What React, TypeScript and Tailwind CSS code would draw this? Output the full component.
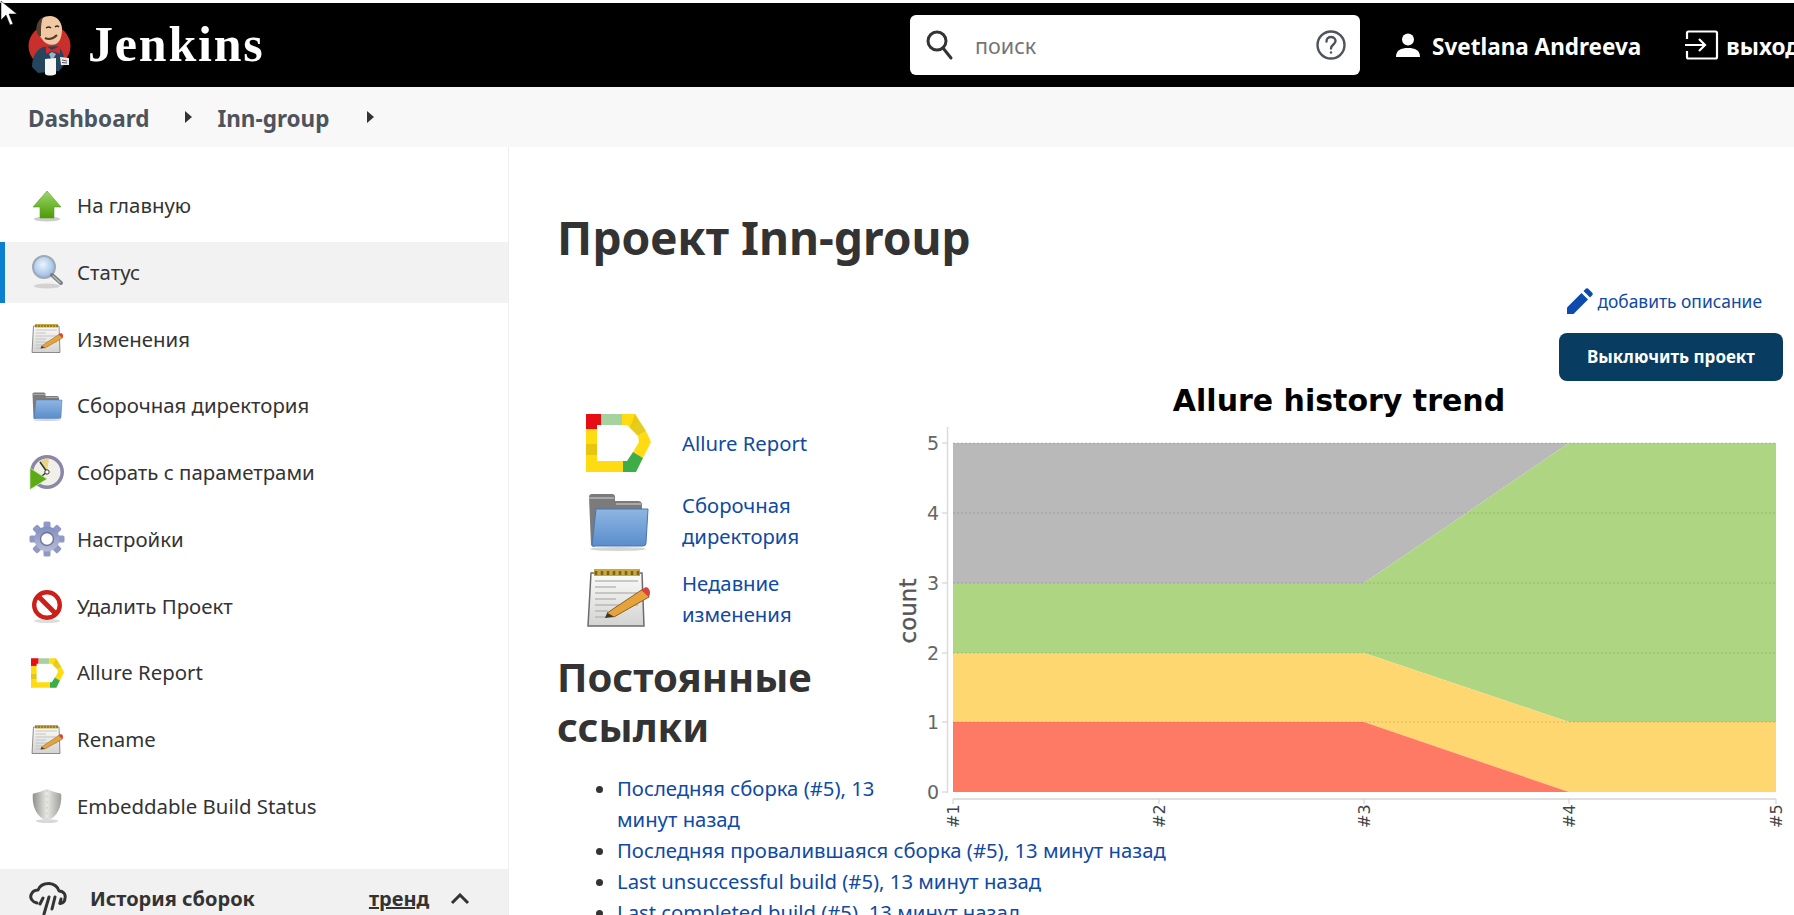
import React from "react";

const FONT = { fontFamily: '"Noto Sans", "Open Sans", sans-serif' };

function JenkinsLogo() {
  return (
    <svg width="46" height="62" viewBox="0 0 46 62" className="shrink-0">
      <circle cx="23.5" cy="31" r="21" fill="#c9302c" />
      <path d="M6 52 C6 42 10 35 17 32 L31 31 C36 34 39 40 38 50 L33 56 L12 58 Z" fill="#25445d" />
      <path d="M13 11 C13 4 18 1 24 1 C31 1 35 6 36 13 C36 20 35 26 30 29 C25 31 19 29 16 24 C13 21 12 16 13 11 Z" fill="#f0c8a4" />
      <path d="M11 18 C9 11 12 5 17 2 C15 8 15 12 15 21 C13 22 12 20 11 18 Z" fill="#54402f" />
      <path d="M20 13 q3 -2 5 0 M29 12 q2 -2 4 0" stroke="#3a2a20" strokeWidth="1.3" fill="none" />
      <path d="M19 23 q6 3 12 -3" stroke="#5a3a2a" strokeWidth="2" fill="none" />
      <path d="M20 31 L26 35 L34 31 L34 39 L26 36 L20 39 Z" fill="#d8262c" />
      <path d="M23 39 L26 46 L30 39 L26 37 Z" fill="#9db3c4" />
      <path d="M19 44 L30 43 L30 59 C27 61 21 61 19 59 Z" fill="#f6f6f2" />
      <path d="M34 42 L43 43 L43 50 L35 50 Z" fill="#f1ece0" />
      <path d="M36 45 L41 46 M36 47.5 L41 48" stroke="#556" strokeWidth="1" />
    </svg>
  );
}

function UpArrow() {
  return (
    <svg width="36" height="36" viewBox="0 0 36 36">
      <defs>
        <linearGradient id="ga" x1="0" y1="0" x2="0" y2="1">
          <stop offset="0" stopColor="#9ad86a" />
          <stop offset="1" stopColor="#4e9a06" />
        </linearGradient>
      </defs>
      <ellipse cx="18" cy="31" rx="13" ry="2.5" fill="#ccc" />
      <path d="M18 3 L32 19 L25 19 L25 30 L11 30 L11 19 L4 19 Z" fill="url(#ga)" stroke="#5c9d2c" strokeWidth="0.6" />
    </svg>
  );
}

function Magnifier() {
  return (
    <svg width="36" height="36" viewBox="0 0 36 36">
      <defs>
        <radialGradient id="gm" cx="0.45" cy="0.4" r="0.6">
          <stop offset="0" stopColor="#ecf4fd" />
          <stop offset="1" stopColor="#95b8e4" />
        </radialGradient>
      </defs>
      <ellipse cx="18" cy="32" rx="13" ry="2.5" fill="#d2d2d2" />
      <circle cx="15" cy="13" r="11" fill="url(#gm)" stroke="#9fa9b3" strokeWidth="2" />
      <path d="M23 21 L32 29" stroke="#777d84" strokeWidth="4" strokeLinecap="round" />
      <path d="M24 22 L31 28.5" stroke="#b9bdc2" strokeWidth="1.4" strokeLinecap="round" />
    </svg>
  );
}

function Notepad({ size = 32 }: { size?: number }) {
  return (
    <svg width={size} height={size} viewBox="0 0 64 64">
      <defs>
        <linearGradient id="gn" x1="0" y1="0" x2="0" y2="1">
          <stop offset="0" stopColor="#fbfbf9" />
          <stop offset="1" stopColor="#d3d3d1" />
        </linearGradient>
      </defs>
      <path d="M5 6 L56 6 L58 59 L2 59 Z" fill="url(#gn)" stroke="#6b6b6b" strokeWidth="1.5" />
      <path d="M8 2 H54 V9 H8 Z" fill="#c8a93f" />
      <path d="M10 4 V8 M16 4 V8 M22 4 V8 M28 4 V8 M34 4 V8 M40 4 V8 M46 4 V8 M52 4 V8" stroke="#7a6418" strokeWidth="2.6" />
      <path d="M9 14 H52 M9 20 H30 M9 26 H52 M9 32 H30 M9 38 H52 M9 44 H22 M9 50 H22" stroke="#b9b9b9" strokeWidth="1.6" />
      <path d="M21 46 L57 22 L63 30 L28 50 Z" fill="#e5a23d" stroke="#8a6320" strokeWidth="1" />
      <path d="M21 46 L28 50 L19 51 Z" fill="#41342a" />
      <path d="M55 23 L60 20 C64 21 65 26 63 30 Z" fill="#d8433a" />
    </svg>
  );
}

function FolderIcon({ size = 32 }: { size?: number }) {
  return (
    <svg width={size} height={size} viewBox="0 0 64 64">
      <defs>
        <linearGradient id="gf" x1="0" y1="0" x2="0" y2="1">
          <stop offset="0" stopColor="#8fb6e3" />
          <stop offset="1" stopColor="#5a8dcb" />
        </linearGradient>
      </defs>
      <path d="M3 8 Q3 5 6 5 L26 5 Q29 5 29 8 V12 L52 12 Q56 12 56 16 V24 L8 58 L5 56 Z" fill="#7b7b7b" />
      <path d="M3 9 H28 M30 15 H55" stroke="#a9a9a9" strokeWidth="2" />
      <path d="M10 20 L62 20 L60 54 Q60 57 57 57 L6 57 Z" fill="url(#gf)" stroke="#4676b4" strokeWidth="1" />
      <ellipse cx="32" cy="60" rx="28" ry="2" fill="#d4d4d4" />
    </svg>
  );
}

function ClockPlay() {
  return (
    <svg width="36" height="36" viewBox="0 0 36 36">
      <circle cx="18" cy="17" r="17" fill="#8a86a8" />
      <circle cx="18" cy="17" r="13.5" fill="#f1f0e8" />
      <path d="M18 17 L10 7 A13.5 13.5 0 0 1 20 3.6 Z" fill="#e9d586" />
      <path d="M18 17 L11 7 M18 17 L9 24" stroke="#333" strokeWidth="1.5" />
      <circle cx="18" cy="17" r="2.2" fill="#fff" stroke="#333" />
      <path d="M1 13 L18 24 L1 34.5 Z" fill="#5cab16" stroke="#c7e5ad" strokeWidth="0.8" />
    </svg>
  );
}

function Gear() {
  const teeth = [0, 45, 90, 135, 180, 225, 270, 315];
  return (
    <svg width="36" height="36" viewBox="0 0 36 36">
      <defs>
        <linearGradient id="gg" x1="0" y1="0" x2="0" y2="1">
          <stop offset="0" stopColor="#7f8fc0" />
          <stop offset="1" stopColor="#b9bcd8" />
        </linearGradient>
      </defs>
      <g fill="url(#gg)">
        {teeth.map((a) => (
          <rect key={a} x="14.5" y="0.5" width="7" height="8" rx="1.5" fill="#8f99c4" transform={`rotate(${a} 18 18)`} />
        ))}
        <circle cx="18" cy="18" r="12.5" />
      </g>
      <circle cx="18" cy="18" r="6.5" fill="#fff" stroke="#6f7391" strokeWidth="1.4" />
    </svg>
  );
}

function NoSign() {
  return (
    <svg width="36" height="36" viewBox="0 0 36 36">
      <ellipse cx="18" cy="33" rx="13" ry="2" fill="#ddd" />
      <circle cx="18" cy="17" r="12.8" fill="#fff" stroke="#cc1f1a" strokeWidth="4.4" />
      <path d="M9 8 L27 26" stroke="#cc1f1a" strokeWidth="5" />
    </svg>
  );
}

function AllureIcon({ width = 33, height = 30 }: { width?: number; height?: number }) {
  return (
    <svg width={width} height={height} viewBox="0 0 65 58">
      <path d="M0 15 V0 H15 V11 H11 V15 Z" fill="#e80c14" />
      <path d="M15 0 H36 V11 H15 Z" fill="#a5d29f" />
      <path d="M36 0 H49 L53 8 L44 14 L41 11 H36 Z" fill="#ffdb12" />
      <path d="M49 0 L60 17 L52 22 L44 14 Z" fill="#e5c90f" opacity="0.95" />
      <path d="M60 17 L65 28 L57 44 L47 38 L53 28 L52 22 Z" fill="#ffdb12" />
      <path d="M47 38 L57 44 L50 58 L37 58 V47 L41 47 Z" fill="#3fad47" />
      <path d="M0 15 H11 V30 H0 Z" fill="#ffdb12" />
      <path d="M0 30 H11 V41 H0 Z" fill="#e7c60f" />
      <path d="M0 41 H11 V47 H37 V58 H0 Z" fill="#ffdb12" />
    </svg>
  );
}

function Shield() {
  return (
    <svg width="34" height="36" viewBox="0 0 36 38">
      <defs>
        <linearGradient id="gs" x1="0" y1="0" x2="1" y2="0">
          <stop offset="0" stopColor="#8f918c" />
          <stop offset="0.5" stopColor="#e8e8e4" />
          <stop offset="1" stopColor="#9c9e99" />
        </linearGradient>
      </defs>
      <ellipse cx="18" cy="35" rx="12" ry="2" fill="#d8d8d8" />
      <path d="M18 1 L25 4 L33 6 C34 18 30 30 18 35 C6 30 2 18 3 6 L11 4 Z" fill="url(#gs)" />
      <path d="M18 2 V34" stroke="#c2c2be" strokeWidth="1" strokeDasharray="2 4" />
    </svg>
  );
}

function CloudRain() {
  return (
    <svg width="38" height="34" viewBox="0 0 38 34" fill="none" stroke="#333" strokeWidth="3" strokeLinecap="round" strokeLinejoin="round">
      <path d="M8 21 C3 20 1 16 2 13 C3 10 6 8 9 8 C11 3 16 1.5 20 1.5 C25 1.5 29 5 30 9 C34 9 37 12 36 16 C36 19 34 21 31 21.5" />
      <path d="M14 16 L11 22 M20 15 L15 32 M26 15 L23 27 M32 17 L31 21" />
    </svg>
  );
}

function Chart() {
  const x1 = 58, x2 = 264, x3 = 469, x4 = 674, x5 = 881;
  const ys = [407, 337, 268, 198, 128, 58];
  const xs = [x1, x2, x3, x4, x5];
  return (
    <svg width="894" height="454" viewBox="0 -4 894 454" className="block -mr-[6px]">
      <text x="444" y="26" textAnchor="middle" fontFamily="DejaVu Sans" fontWeight="700" fontSize="30" fill="#000">Allure history trend</text>
      <polygon points={`${x1},${ys[5]} ${x4},${ys[5]} ${x3},${ys[3]} ${x1},${ys[3]}`} fill="#b9b9b9" />
      <polygon points={`${x1},${ys[3]} ${x3},${ys[3]} ${x4},${ys[5]} ${x5},${ys[5]} ${x5},${ys[1]} ${x4},${ys[1]} ${x3},${ys[2]} ${x1},${ys[2]}`} fill="#aed682" />
      <polygon points={`${x1},${ys[2]} ${x3},${ys[2]} ${x4},${ys[1]} ${x5},${ys[1]} ${x5},${ys[0]} ${x4},${ys[0]} ${x3},${ys[1]} ${x1},${ys[1]}`} fill="#ffd770" />
      <polygon points={`${x1},${ys[1]} ${x3},${ys[1]} ${x4},${ys[0]} ${x1},${ys[0]}`} fill="#ff7a64" />
      {ys.slice(1).map((y) => (
        <line key={y} x1={x1} x2={x5} y1={y} y2={y} stroke="#000" strokeOpacity="0.14" strokeWidth="1" strokeDasharray="2 2" />
      ))}
      <line x1="52.5" x2="52.5" y1="42" y2="408" stroke="#dcdcdc" strokeWidth="1.5" />
      <line x1={x1} x2={x5} y1="414" y2="414" stroke="#d4d4d4" strokeWidth="1.5" />
      {ys.map((y, i) => (
        <g key={y}>
          <line x1="47" x2="52" y1={y} y2={y} stroke="#ccc" />
          <text x="44" y={y + 7} textAnchor="end" fontFamily="DejaVu Sans" fontSize="19" fill="#666">{i}</text>
        </g>
      ))}
      {xs.map((x, i) => (
        <g key={x}>
          <line x1={x} x2={x} y1="414" y2="419" stroke="#ccc" />
          <text transform={`translate(${x + 6} 443) rotate(-90)`} fontFamily="DejaVu Sans" fontSize="16" fill="#444">{`#${i + 1}`}</text>
        </g>
      ))}
      <text transform="translate(21 226) rotate(-90)" textAnchor="middle" fontFamily="DejaVu Sans" fontSize="23" fill="#555" stroke="#555" strokeWidth="0.35">count</text>
    </svg>
  );
}

const NAV: [React.ReactNode, string, boolean?][] = [
  [<UpArrow />, "На главную"],
  [<Magnifier />, "Статус", true],
  [<Notepad />, "Изменения"],
  [<FolderIcon />, "Сборочная директория"],
  [<ClockPlay />, "Собрать с параметрами"],
  [<Gear />, "Настройки"],
  [<NoSign />, "Удалить Проект"],
  [<AllureIcon />, "Allure Report"],
  [<Notepad />, "Rename"],
  [<Shield />, "Embeddable Build Status"],
];

const LINKS = [
  "Последняя сборка (#5), 13 минут назад",
  "Последняя провалившаяся сборка (#5), 13 минут назад",
  "Last unsuccessful build (#5), 13 минут назад",
  "Last completed build (#5), 13 минут назад",
];

export default function App() {
  return (
    <div className="relative w-[1794px] h-[915px] overflow-hidden bg-white text-[20.3px] text-[#333]" style={FONT}>
      <svg width="18" height="28" viewBox="0 0 18 28" className="absolute left-0 top-0 z-10">
        <path d="M1 1 L1 20 L6 15 L10 25 L13 24 L9 14 L17 14 Z" fill="#fff" stroke="#000" strokeWidth="0.5" />
      </svg>
      <div className="h-[3px] bg-white" />
      <header className="h-[84px] bg-black flex items-center text-white">
        <div className="ml-[26px] mt-[2px]"><JenkinsLogo /></div>
        <span className="ml-[16px] mb-[3px] w-[174px] shrink-0 text-[50px] leading-none font-bold tracking-[1.8px]" style={{ fontFamily: '"Liberation Serif", serif' }}>Jenkins</span>
        <div className="ml-[648px] w-[450px] h-[60px] shrink-0 bg-white rounded-[6px] flex items-center pl-[14px] pr-[13px]">
          <svg width="30" height="32" viewBox="0 0 30 32" fill="none" stroke="#333" strokeWidth="3" strokeLinecap="round">
            <circle cx="13" cy="12" r="9" />
            <path d="M19 19 L27 29" />
          </svg>
          <span className="ml-[21px] mt-[3px] text-[21.5px] text-[#757575] flex-1">поиск</span>
          <svg width="32" height="32" viewBox="0 0 32 32" fill="none" stroke="#4d545d" strokeWidth="2.4">
            <circle cx="16" cy="16" r="13.5" />
            <path d="M11.5 12.5 C11.5 9.5 13.5 8 16 8 C18.5 8 20.5 9.6 20.5 12 C20.5 15.5 16 15.5 16 19.5" strokeLinecap="round" />
            <circle cx="16" cy="23.5" r="1.2" fill="#4d545d" stroke="none" />
          </svg>
        </div>
        <svg width="26" height="26" viewBox="0 0 26 26" fill="#fff" className="ml-[35px] shrink-0">
          <circle cx="13" cy="7.5" r="6" />
          <path d="M1 25 C1 18 6 16 13 16 C20 16 25 18 25 25 Z" />
        </svg>
        <span className="ml-[11px] mt-[4px] text-[22.5px] font-bold whitespace-nowrap">Svetlana Andreeva</span>
        <svg width="34" height="30" viewBox="0 0 34 30" fill="none" stroke="#fff" strokeWidth="2.2" className="ml-[44px] shrink-0">
          <path d="M2 9 V3 Q2 1.5 3.5 1.5 H30.5 Q32 1.5 32 3 V27 Q32 28.5 30.5 28.5 H3.5 Q2 28.5 2 27 V21" />
          <path d="M0 15 H20 M14 9 L20 15 L14 21" />
        </svg>
        <span className="ml-[7px] mt-[4px] text-[22.5px] font-bold whitespace-nowrap">выход</span>
      </header>
      <nav className="h-[60px] bg-[#f8f8f8] flex items-center text-[#4d545d] text-[22.5px] font-bold">
        <span className="ml-[28px] mt-[4px]">Dashboard</span>
        <svg width="8" height="12" viewBox="0 0 8 12" className="ml-[36px] mb-[1px]"><path d="M0 0 L7 6 L0 12 Z" fill="#333" /></svg>
        <span className="ml-[24px] mt-[4px]">Inn-group</span>
        <svg width="8" height="12" viewBox="0 0 8 12" className="ml-[38px] mb-[1px]"><path d="M0 0 L7 6 L0 12 Z" fill="#333" /></svg>
      </nav>
      <div className="flex h-[768px]">
        <aside className="w-[509px] shrink-0 border-r border-[#eeeeee] pt-[28px] flex flex-col text-[20.4px]">
          <div className="flex flex-col gap-[5.75px] shrink-0">
            {NAV.map(([icon, label, active], i) => (
              <div key={i} className={`h-[61px] flex items-center border-l-[5px] ${active ? "bg-[#f2f2f2] border-[#0b7fd0]" : "border-transparent"}`}>
                <div className="ml-[24px] w-[36px] flex justify-center">{icon}</div>
                <span className="ml-[12px]">{label}</span>
              </div>
            ))}
          </div>
          <div className="mt-[32px] h-[60px] shrink-0 bg-[#f1f1f1] flex items-center font-bold text-[20px]">
            <div className="ml-[29px]"><CloudRain /></div>
            <span className="ml-[23px]">История сборок</span>
            <span className="ml-[114px] underline">тренд</span>
            <svg width="20" height="12" viewBox="0 0 20 12" fill="none" stroke="#333" strokeWidth="3" className="ml-[21px]">
              <path d="M2 10 L10 2 L18 10" />
            </svg>
          </div>
        </aside>
        <main className="flex-1 min-w-0 pl-[49px] pr-[11px]">
          <h1 className="mt-[52px] -ml-[1px] text-[46.2px] leading-[78px] font-bold text-[#333]">Проект Inn-group</h1>
          <a className="mt-[11px] mr-[21px] flex justify-end items-center gap-[4px] text-[17.4px] text-[#0f4aa3]">
            <svg width="26" height="26" viewBox="0 0 26 26" fill="#0e4bae">
              <path d="M0 26 L0 19.5 L14.5 5 L21 11.5 L6.5 26 Z" />
              <path d="M16.5 3 L19 0.5 Q20 0 21 0.5 L25.5 5 Q26 6 25.5 7 L23 9.5 Z" />
            </svg>
            <span>добавить описание</span>
          </a>
          <div className="mt-[19px] flex justify-end">
            <button className="w-[224px] h-[48px] rounded-[8px] bg-[#083c61] text-white text-[17px] font-bold">Выключить проект</button>
          </div>
          <div className="float-right"><Chart /></div>
          <div className="w-[330px] pt-[28px] text-[#0f4aa3] leading-[31px]">
            <div className="flex items-center h-[68px]">
              <div className="ml-[28px] w-[65px]"><AllureIcon width={65} height={58} /></div>
              <span className="ml-[31px]">Allure Report</span>
            </div>
            <div className="flex items-center h-[88px]">
              <div className="ml-[28px] w-[65px]"><FolderIcon size={64} /></div>
              <span className="ml-[31px] w-[160px]">Сборочная директория</span>
            </div>
            <div className="flex items-center h-[68px]">
              <div className="ml-[28px] w-[65px]"><Notepad size={64} /></div>
              <span className="ml-[31px] w-[160px]">Недавние изменения</span>
            </div>
          </div>
          <h2 className="mt-[19px] -ml-[1px] text-[40px] leading-[50px] font-bold text-[#333]">Постоянные ссылки</h2>
          <ul className="mt-[21px] ml-[59px] list-disc text-[#0f4aa3] leading-[31px] marker:text-[#333]">
            {LINKS.map((l) => <li key={l}>{l}</li>)}
          </ul>
        </main>
      </div>
    </div>
  );
}
